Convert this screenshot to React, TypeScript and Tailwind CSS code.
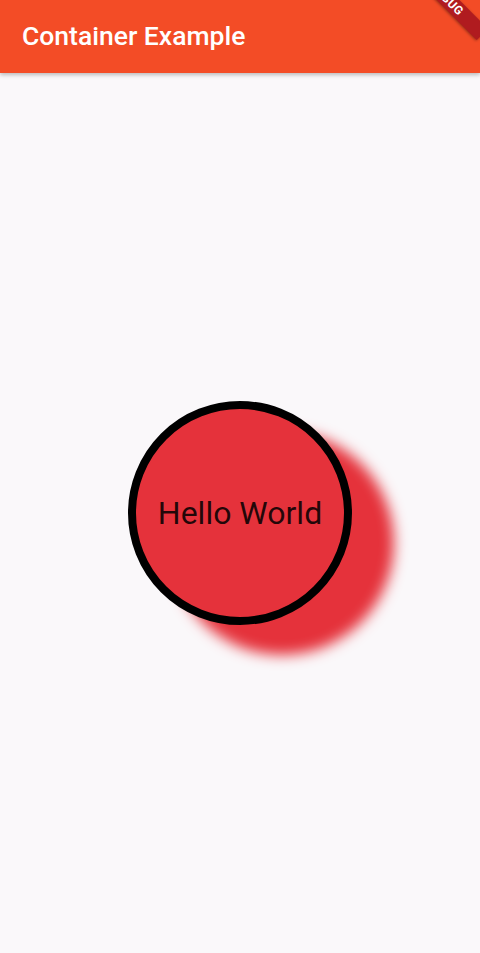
export default function App() {
  return (
    <div
      className="relative flex h-[953px] w-[480px] flex-col overflow-hidden bg-[#faf8fa]"
      style={{ fontFamily: 'Roboto, "Noto Sans", sans-serif' }}
    >
      <header className="z-10 flex h-[73px] shrink-0 items-center bg-[#f34c26] px-[22px] shadow-[0_2px_4px_rgba(0,0,0,0.25)]">
        <h1 className="text-[26.5px] font-medium leading-none text-white">Container Example</h1>
      </header>

      <main className="flex flex-1 items-center justify-center">
        <div className="flex h-[224px] w-[224px] items-center justify-center rounded-full border-[8px] border-black bg-[#e5323b] shadow-[42px_30px_14px_#e5323b]">
          <span className="text-[32px] leading-none text-black/85">Hello World</span>
        </div>
      </main>

      {/* debug ribbon */}
      <div className="absolute left-[397px] top-[-9px] z-20 flex h-[16px] w-[100px] rotate-45 items-center justify-center bg-[#b01b1f] shadow-[0_1px_3px_rgba(0,0,0,0.4)]">
        <span className="text-[12px] font-bold tracking-[0.5px] leading-none text-white">DEBUG</span>
      </div>
    </div>
  );
}
